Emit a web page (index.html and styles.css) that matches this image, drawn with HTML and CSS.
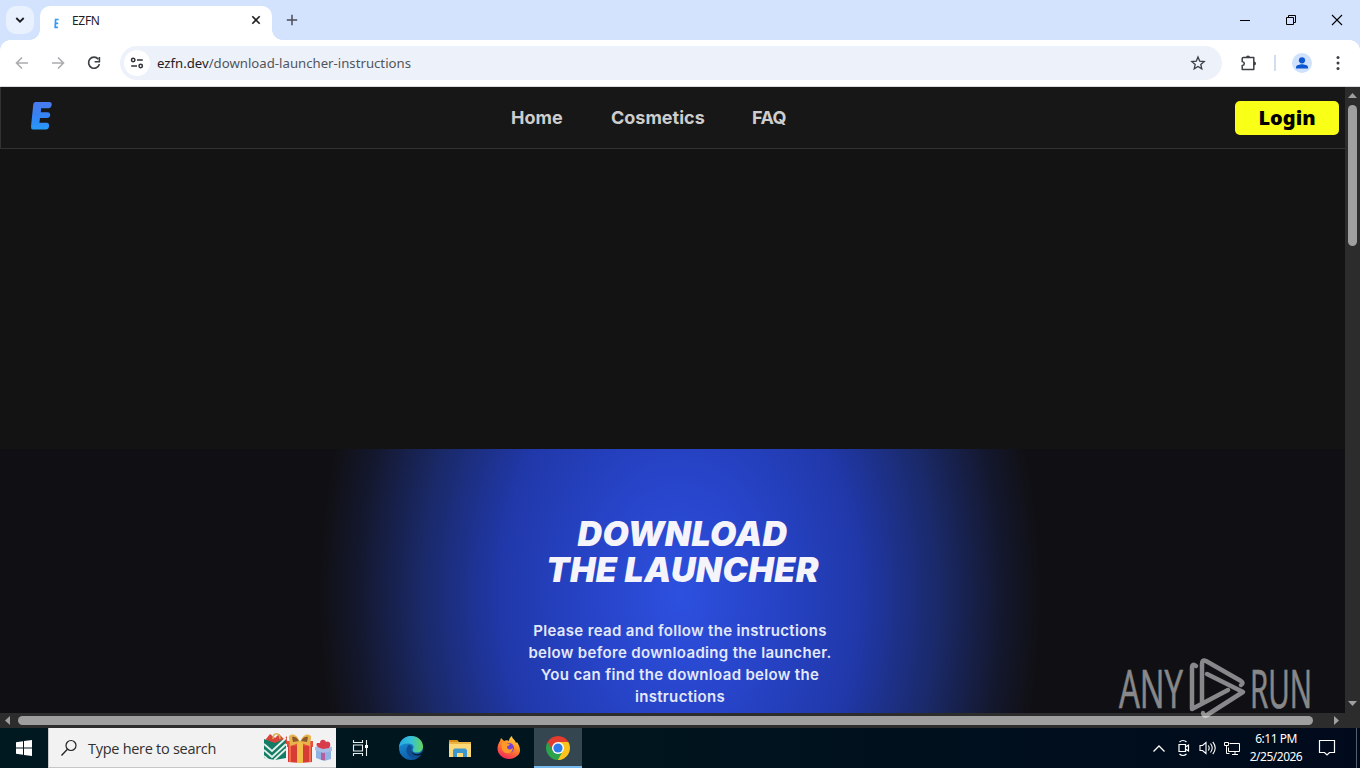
FILE: index.html
```html
<!DOCTYPE html>
<html lang="en">
<head>
  <meta charset="UTF-8" />
  <meta name="viewport" content="width=device-width, initial-scale=1.0"/>
  <title>EZFN</title>
  <link rel="stylesheet" href="styles.css">
</head>
<body>
  <div class="tabstrip">
    <div class="tab-search">
      <svg width="28" height="28" viewBox="0 0 28 28"><path d="M10.3 12l3.7 3.7 3.7-3.7" fill="none" stroke="#1b1d22" stroke-width="1.8"/></svg>
    </div>
    <div class="tab">
      <svg class="favicon" width="6" height="11" viewBox="0 0 6 11"><path d="M4.600 1.500H1.600L1.200 9.300H3.900M1.600 5.300H4.200" fill="none" stroke="#2f9bff" stroke-width="1.700"/></svg>
      <span class="tab-title">EZFN</span>
      <svg class="tab-close" width="10" height="10" viewBox="0 0 10 10"><path d="M1.3 1.3l7.4 7.4M8.7 1.3L1.3 8.7" stroke="#1f2023" stroke-width="1.6"/></svg>
    </div>
    <svg class="new-tab" width="12" height="12" viewBox="0 0 12 12"><path d="M6 .8v10.4M.8 6h10.400" stroke="#4a4e55" stroke-width="1.500"/></svg>
    <div class="window-buttons">
      <svg width="46" height="40" viewBox="0 0 46 40"><path d="M18 20.5h10" stroke="#000"/></svg>
      <svg width="46" height="40" viewBox="0 0 46 40"><path d="M18.5 17.5h7v7h-7zM20.5 17.5v-2h7v7h-2" fill="none" stroke="#000"/></svg>
      <svg width="46" height="40" viewBox="0 0 46 40"><path d="M18 15l10 10M28 15L18 25" stroke="#000" stroke-width="1.1"/></svg>
    </div>
  </div>

  <div class="toolbar">
    <svg class="nav-icon" width="36" height="36" viewBox="0 0 36 36"><path d="M24 18H12.5M18 12.5L12.500 18l5.500 5.500" fill="none" stroke="#aaacaf" stroke-width="1.600"/></svg>
    <svg class="nav-icon" width="36" height="36" viewBox="0 0 36 36"><path d="M12 18h11.500M18 12.500l5.500 5.500-5.500 5.500" fill="none" stroke="#aaacaf" stroke-width="1.600"/></svg>
    <svg class="nav-icon" width="36" height="36" viewBox="0 0 36 36"><path d="M22.3 14.2a5.5 5.5 0 1 0 1.1 4.9" fill="none" stroke="#3c4045" stroke-width="1.7"/><path d="M23.4 12v4.800h-4.800" fill="none" stroke="#3c4045" stroke-width="1.6"/></svg>
    <div class="omnibox">
      <div class="site-info">
        <svg width="14" height="12" viewBox="0 0 14 12"><g fill="none" stroke="#2e3136" stroke-width="1.5"><circle cx="3.2" cy="3" r="1.7"/><path d="M7 3h5.8M1.2 9h5.8"/><circle cx="10.7" cy="9" r="1.7"/></g></svg>
      </div>
      <div class="url">ezfn.dev<span>/download-launcher-instructions</span></div>
      <svg class="star" width="16" height="16" viewBox="0 0 16 16"><path d="M8 2l1.700 4.100 4.500.4-3.400 2.900 1 4.400L8 11.500l-3.800 2.300 1-4.400-3.400-2.900 4.500-.4z" fill="none" stroke="#3c4045" stroke-width="1.3"/></svg>
    </div>
    <svg class="extensions" width="18" height="18" viewBox="0 0 18 18"><path d="M3.200 3.400h10.600v12.200H2.200v-4c2.800-.4 2.800-3.700 0-4.100V4.400q0-1 1-1z" fill="none" stroke="#3c4045" stroke-width="1.500" stroke-linejoin="round"/><path d="M6 3.400a2 2 0 0 1 4 0zM14 7.500a2 2 0 0 1 0 4z" fill="#3c4045"/></svg>
    <div class="divider"></div>
    <svg class="avatar" width="20" height="20" viewBox="0 0 20 20"><circle cx="10" cy="10" r="10" fill="#d0e1fc"/><circle cx="10" cy="7.3" r="3.1" fill="#0b57d0"/><path d="M4 15.5v-1.3c0-2 4-2.9 6-2.9s6 .9 6 2.9v1.3z" fill="#0b57d0"/></svg>
    <svg class="more" width="4" height="16" viewBox="0 0 4 16"><g fill="#3c4045"><circle cx="2" cy="2.6" r="1.5"/><circle cx="2" cy="8" r="1.5"/><circle cx="2" cy="13.4" r="1.5"/></g></svg>
  </div>

  <div class="viewport">
    <div class="page">
      <nav class="navbar">
        <svg class="logo" width="24" height="30" viewBox="0 0 24 30">
          <defs><linearGradient id="logoFill" x1="0" y1="0" x2="0" y2="1"><stop offset="0" stop-color="#4a79ee"/><stop offset=".55" stop-color="#3484f5"/><stop offset="1" stop-color="#279af8"/></linearGradient></defs>
          <path d="M5.5 1H19.5Q22 1.200 21.700 4 21.200 7 18.500 7.200H11.200L10.800 11.300H17.500Q20.500 11.600 20.200 14.300 19.800 17 17 17H10L9.400 21.800H17Q19.400 22.300 19 25.200 18.600 28.500 16 28.500H3Q.8 28.200 1 25.500L3.300 3Q3.800 1 5.500 1z" fill="url(#logoFill)"/>
        </svg>
        <div class="links">
          <a class="home">Home</a>
          <a class="cosmetics">Cosmetics</a>
          <a class="faq">FAQ</a>
        </div>
        <button class="login">Login</button>
      </nav>
      <section class="hero">
        <h1>DOWNLOAD<br>THE LAUNCHER</h1>
        <p>Please read and follow the instructions<br>below before downloading the launcher.<br>You can find the download below the<br>instructions</p>
      </section>
    </div>
    <div class="scroll-y">
      <svg width="15" height="17" viewBox="0 0 15 17"><path d="M3 11l4.5-5 4.5 5z" fill="#a0a0a0"/></svg>
      <div class="thumb"></div>
      <svg class="down" width="15" height="17" viewBox="0 0 15 17"><path d="M3 5l4.5 5L12 5z" fill="#a0a0a0"/></svg>
    </div>
  </div>
  <div class="scroll-x">
    <svg width="17" height="15" viewBox="0 0 17 15"><path d="M10 3L5 7.5l5 4.5z" fill="#a0a0a0"/></svg>
    <div class="thumb"></div>
    <svg class="right" width="17" height="15" viewBox="0 0 17 15"><path d="M6 3l5 4.5L6 12z" fill="#a0a0a0"/></svg>
  </div>

  <div class="taskbar">
    <div class="start">
      <svg width="16" height="16" viewBox="0 0 16 16"><path d="M0 2.200L7 1.200V7.500H0zM8 1.100L16 0v7.500H8zM0 8.500h7v6.300L0 13.800zM8 8.500h8V16l-8-1.100z" fill="#fff"/></svg>
    </div>
    <div class="search">
      <svg width="18" height="18" viewBox="0 0 18 18"><circle cx="10" cy="6.500" r="5" fill="none" stroke="#222" stroke-width="1.200"/><path d="M6.400 10.200L.5 16.500" stroke="#222" stroke-width="1.300"/></svg>
      <span>Type here to search</span>
      <svg class="gifts" width="70" height="34" viewBox="0 0 70 34">
        <path d="M3 8l4-5 5 4 4-4 5 5 3-3v8H3z" fill="#d9443a"/>
        <path d="M10 8c0-7 7-7 7 0" fill="none" stroke="#d8b24a" stroke-width="1.5"/>
        <path d="M1 8l11 4L23 7v20l-11 2L1 27z" fill="#147c66"/>
        <path d="M1 13l8 7 14-13M1 19l8 7 14-13M1 25l4 3.500M11 29l12-11" fill="none" stroke="#e2f0e9" stroke-width="1.8"/>
        <path d="M24 10h26v6H24z" fill="#e7503b"/>
        <path d="M25 15h24v16l-12 1-12-1z" fill="#d63c33"/>
        <path d="M34 10h6v22h-6z" fill="#f2bd4a"/>
        <path d="M27 13v18M47 13v18" stroke="#f06b4e" stroke-width="2"/>
        <path d="M37 11c-3-8-8-9-11-6 0 4 1 8 1 10 3-1 7-2 10-4zM37 11c3-8 8-9 11-6 0 4-1 8-1 10-3-1-7-2-10-4z" fill="#e8b34a"/>
        <path d="M36 10c-2-4-5-5-7-4l1 5zM38 10c2-4 5-5 7-4l-1 5z" fill="#8d5a2d"/>
        <path d="M53 18l15 1v9l-7 2-8-3z" fill="#8eb3e3"/>
        <path d="M58 18h4v11h-4z" fill="#b65fa0"/>
        <path d="M52 16l7-2 10 2v4l-9 2-8-3z" fill="#a8bde6"/>
        <path d="M60 18c-4-1-8-3-6-6l3 0c0-4 5-4 6-1 3-2 6 2 3 6z" fill="#d83b4a"/>
      </svg>
    </div>
    <div class="app task-view">
      <svg width="18" height="16" viewBox="0 0 18 16"><path d="M1.500 0v2.500h9V0M1.500 16v-2.500h9V16M1.500 5h9v6h-9zM14.500 0v16" fill="none" stroke="#e8eef0" stroke-width="1.1"/><path d="M13 5h3v3h-3z" fill="#fff"/></svg>
    </div>
    <div class="app">
      <svg width="24" height="24" viewBox="0 0 24 24">
        <defs><linearGradient id="edgeTop" x1="0" x2="1"><stop offset="0" stop-color="#26a8e5"/><stop offset=".5" stop-color="#35c1d8"/><stop offset="1" stop-color="#65d65a"/></linearGradient><linearGradient id="edgeBody" x1="0" y1="0" x2=".5" y2="1"><stop offset="0" stop-color="#1b9de2"/><stop offset="1" stop-color="#0c59a4"/></linearGradient></defs>
        <circle cx="12" cy="12" r="12" fill="url(#edgeBody)"/>
        <path d="M0 11C1 4 6 0 12 0c7 0 12 5 12 10.500 0 4-3 6-6 6-3.500 0-5-1.500-4-3 2-4-1-6-5-6-4 0-7 1.500-9 3.500z" fill="url(#edgeTop)"/>
        <path d="M9.500 9c-5 6 0 13 6 13 3 0 5-1 7-4-4 2-10 1-10-5 1-2-.5-4-3-4z" fill="#114f94"/>
        <path d="M13.500 13.500c-1.500 2.500 1 5 5 4.700 2-.2 3.500-1 5.500-3v2l-2 1.500c-4 2-11 0-8.500-5.200z" fill="#001622"/>
      </svg>
    </div>
    <div class="app">
      <svg width="22" height="19" viewBox="0 0 22 19"><path d="M0 1h8l2 2h12v15H0z" fill="#e9b544"/><path d="M0 1h8l1 2H0z" fill="#d98b19"/><path d="M0 5h22v13H0z" fill="#fbd978"/><path d="M4 18v-7l1.500-1.500h11L18 11v7h-4v-4H8v4z" fill="#3d97cf"/></svg>
    </div>
    <div class="app">
      <svg width="24" height="24" viewBox="0 0 24 24">
        <defs><linearGradient id="fox" x1=".8" y1="0" x2=".3" y2="1"><stop offset="0" stop-color="#ffe14a"/><stop offset=".45" stop-color="#ff8b26"/><stop offset="1" stop-color="#f5245c"/></linearGradient></defs>
        <path d="M3 5l1-3 3 3c2-1 4-1 5 0 0-2 1-4 3-5 0 3 3 3 4 7l1-1c4 6 4 11 0 14-4 4-12 4-16 0C-1 16 0 9 3 5z" fill="url(#fox)"/>
        <circle cx="12" cy="12" r="5" fill="#7542d5"/>
        <path d="M5 7c2-1 4-.5 5 .5l3 .2c0 2-3 2-3 3.300 0 3 4 3 6 1-1 5-4 6-7 5-4-1-5-6-4-10z" fill="#ff9928"/>
      </svg>
    </div>
    <div class="app active">
      <svg width="24" height="24" viewBox="0 0 24 24">
        <path d="M12 12L1.610 6A12 12 0 0 1 22.390 6z" fill="#e33b2e"/>
        <path d="M12 12L22.390 6A12 12 0 0 1 12 24z" fill="#fcc31e"/>
        <path d="M12 12v12A12 12 0 0 1 1.610 6z" fill="#2ba24c"/>
        <path d="M12 6h10.390L17.200 15z" fill="#fcc31e"/>
        <path d="M17.200 15L12 24 9 16z" fill="#2ba24c"/>
        <path d="M6.800 15L1.610 6 12 6z" fill="#e33b2e"/>
        <path d="M1.610 6L6.800 15 10 18 3 18z" fill="#2ba24c"/>
        <path d="M17.200 15L12 24l4-1 5-8z" fill="#fcc31e"/>
        <circle cx="12" cy="12" r="6" fill="#fff"/><circle cx="12" cy="12" r="4.600" fill="#2d7bea"/>
      </svg>
    </div>
    <div class="tray">
      <svg width="14" height="24" viewBox="0 0 14 24"><path d="M1.500 15.500L7 10l5.500 5.500" fill="none" stroke="#fff" stroke-width="1.300"/></svg>
      <svg class="meet" width="14" height="18" viewBox="0 0 14 18"><path d="M2 5.500h6.500v7H2zM8.500 8l3-2v6l-3-2M2.500 3c2-1.800 5-1.800 7 0M2.500 15c2 1.800 5 1.800 7 0" fill="none" stroke="#fff" stroke-width="1.200"/></svg>
      <svg class="volume" width="18" height="16" viewBox="0 0 18 16"><path d="M1 5.500h2.500L7 2.500v11l-3.500-3H1zM9.300 5.500q1.800 2.500 0 5M11.500 3.500q3.400 4.500 0 9M13.800 1.800q4.800 6.200 0 12.400" fill="none" stroke="#fff" stroke-width="1.100"/></svg>
      <svg class="network" width="17" height="15" viewBox="0 0 17 15"><path d="M5.500 2.500h10v8h-11v-4M8 13.500h6M11 10.500v3M.5 1.500h4v3h-4zM2.500 4.500v8h3" fill="none" stroke="#fff"/></svg>
      <div class="clock"><span>6:11 PM</span><span>2/25/2026</span></div>
      <svg class="notify" width="18" height="18" viewBox="0 0 18 18"><path d="M1.500 1.500h15v12h-5L9 16l-2.500-2.500h-5z" fill="none" stroke="#fff" stroke-width="1.200"/></svg>
      <div class="show-desktop"></div>
    </div>
  </div>

  <svg class="watermark" width="204" height="76" viewBox="-4 -6 204 76">
    <g class="watermark-text">
      <text x="1" y="51" textLength="64" lengthAdjust="spacingAndGlyphs">ANY</text>
      <text x="132" y="51" textLength="62" lengthAdjust="spacingAndGlyphs">RUN</text>
    </g>
    <path d="M78 9q-4-3-4 2v41L110 33M84 46V7q0-5 4-3l35 20q3 2 0 4M89 17l36 18-36 23q-3 2-4-2" fill="none" stroke="#fff" stroke-width="4.500" stroke-linejoin="round" stroke-linecap="round"/>
  </svg>
</body>
</html>
```
FILE: styles.css
```css
* {
  box-sizing: border-box;
}
body {
  margin: 0;
  width: 1360px;
  height: 768px;
  overflow: hidden;
  display: flex;
  flex-direction: column;
  font-family: "Noto Sans", sans-serif;
  background: #131313;
}
svg {
  display: block;
  flex: none;
}

/* browser window */
.tabstrip {
  height: 40px;
  flex: none;
  display: flex;
  align-items: center;
  background: #d3e3fd;
}
.tab-search {
  width: 28px;
  height: 28px;
  margin-left: 6px;
  border-radius: 10px;
  background: #e9f1fe;
}
.tab {
  position: relative;
  width: 232px;
  height: 34px;
  margin: 6px 0 0 6px;
  padding: 0 11px 6px 14px;
  display: flex;
  align-items: center;
  background: #fff;
  border-radius: 10px 10px 0 0;
}
.tab::before, .tab::after {
  content: "";
  position: absolute;
  bottom: 0;
  width: 10px;
  height: 10px;
}
.tab::before {
  left: -10px;
  background: radial-gradient(circle at 0 0, transparent 9.5px, #fff 10px);
}
.tab::after {
  right: -10px;
  background: radial-gradient(circle at 100% 0, transparent 9.5px, #fff 10px);
}
.favicon {
  margin-top: 6px;
}
.tab-title {
  margin-left: 12px;
  font-size: 12px;
  letter-spacing: -0.3px;
  color: #1f2023;
}
.tab-close {
  margin-left: auto;
}
.new-tab {
  margin-left: 14px;
}
.window-buttons {
  margin-left: auto;
  display: flex;
}
.toolbar {
  height: 47px;
  flex: none;
  padding: 0 20px 1px 4px;
  display: flex;
  align-items: center;
  background: radial-gradient(circle at 10px 10px, #fff 9.5px, #d3e3fd 10px) 0 0 / 10px 10px no-repeat,
    radial-gradient(circle at 0 10px, #fff 9.5px, #d3e3fd 10px) 100% 0 / 10px 10px no-repeat, #fff;
  border-bottom: 1px solid #d9dde3;
}
.omnibox {
  width: 1102px;
  height: 34px;
  flex: none;
  margin-left: 8px;
  padding: 0 16px 0 4px;
  display: flex;
  align-items: center;
  border-radius: 17px;
  background: #edf1fa;
}
.site-info {
  width: 26px;
  height: 26px;
  display: flex;
  align-items: center;
  justify-content: center;
  border-radius: 50%;
  background: #fff;
}
.url {
  margin-left: 7px;
  font-size: 13.2px;
  color: #1f2023;
}
.url span {
  color: #51555b;
}
.star {
  margin-left: auto;
}
.extensions {
  margin-left: 18px;
}
.divider {
  width: 2px;
  height: 16px;
  margin-left: 16px;
  background: #d3ddef;
}
.avatar {
  margin-left: 16px;
}
.more {
  margin-left: 24px;
}

/* web page */
.viewport {
  height: 626px;
  flex: none;
  display: flex;
}
.page {
  width: 1345px;
  overflow: hidden;
}
.navbar {
  height: 62px;
  display: flex;
  align-items: center;
  padding-right: 6px;
  background: #171717;
  border: 1px solid #333;
  border-width: 0 0 1px 1px;
}
.logo {
  margin-left: 29px;
  margin-top: -3px;
}
.links {
  display: flex;
  margin-left: 457px;
  font-family: Inter, sans-serif;
  font-size: 18px;
  font-weight: 700;
  color: #cdcdcd;
}
.home {
  width: 100px;
}
.cosmetics {
  width: 141px;
}
.faq {
  letter-spacing: -0.5px;
}
.login {
  width: 104px;
  height: 34px;
  margin-left: auto;
  padding: 0;
  border: none;
  border-radius: 5px;
  background: #f9ff16;
  color: #000;
  font-family: "Noto Sans", sans-serif;
  font-size: 20px;
  font-weight: 900;
}
.hero {
  width: 1360px;
  height: 264px;
  margin-top: 300px;
  padding-top: 67px;
  text-align: center;
  font-family: Inter, sans-serif;
  color: #f4f4fa;
  background: radial-gradient(ellipse 360px 500px at 680px 146px, #2d50df 0%, #2744c8 25%, #2038a9 50%, #1a2968 72%, #14182f 89%, #101014 100%);
}
.hero h1 {
  margin: 0;
  padding-left: 5px;
  font-size: 34px;
  line-height: 36px;
  font-weight: 900;
  font-style: italic;
  letter-spacing: 0.4px;
}
.hero p {
  margin: 32px 0 0;
  font-size: 15px;
  line-height: 22px;
  font-weight: 600;
  letter-spacing: 0.33px;
  color: #e3e8fb;
}
.scroll-y {
  width: 15px;
  background: #2c2c2c;
  display: flex;
  flex-direction: column;
}
.scroll-y .thumb {
  width: 9px;
  height: 141px;
  margin: 1px 0 0 3px;
  border-radius: 5px;
  background: #9f9f9f;
}
.scroll-y .down {
  margin-top: auto;
}
.scroll-x {
  height: 15px;
  flex: none;
  display: flex;
  align-items: center;
  background: #2c2c2c;
}
.scroll-x .thumb {
  width: 1295px;
  height: 9px;
  margin-left: 1px;
  border-radius: 5px;
  background: #9f9f9f;
}
.scroll-x .right {
  margin-left: auto;
  margin-right: 15px;
}

/* desktop taskbar */
.taskbar {
  height: 40px;
  flex: none;
  display: flex;
  background: linear-gradient(90deg, #001820 0%, #00151e 45%, #000a1c 100%);
}
.start {
  width: 48px;
  display: flex;
  align-items: center;
  justify-content: center;
}
.search {
  width: 288px;
  padding: 0 3px 0 12px;
  display: flex;
  align-items: center;
  background: #f2f2f2;
  border: 1px solid #c4c6c8;
  border-width: 0 0 1px 1px;
  color: #303030;
  font-family: "Open Sans", sans-serif;
  font-size: 14.5px;
  letter-spacing: -0.28px;
}
.search span {
  margin-left: 9px;
  padding-top: 1px;
  white-space: nowrap;
}
.gifts {
  margin-left: auto;
}
.app {
  width: 48px;
  margin-left: 1px;
  display: flex;
  align-items: center;
  justify-content: center;
}
.task-view {
  margin-right: 1px;
}
.active {
  background: #34464f;
  border-bottom: 2px solid #76b9ed;
  padding-top: 2px;
}
.tray {
  margin-left: auto;
  display: flex;
  align-items: center;
  color: #fff;
}
.meet {
  margin-left: 11px;
}
.volume {
  margin-left: 8px;
}
.network {
  margin-left: 7px;
}
.clock {
  width: 60px;
  margin-left: 5px;
  display: flex;
  flex-direction: column;
  align-items: center;
  font-size: 12px;
  line-height: 18px;
  letter-spacing: -0.5px;
}
.notify {
  margin-left: 12px;
}
.show-desktop {
  width: 4px;
  height: 40px;
  margin-left: 20px;
  border-left: 1px solid #56606c;
}

/* stamp over the whole desktop */
.watermark {
  position: absolute;
  left: 1114px;
  top: 651px;
  opacity: 0.5;
}
.watermark-text {
  font-family: "Open Sans", sans-serif;
  font-size: 53px;
  fill: #fff;
  stroke: #fff;
  stroke-width: 0.6px;
}
```
